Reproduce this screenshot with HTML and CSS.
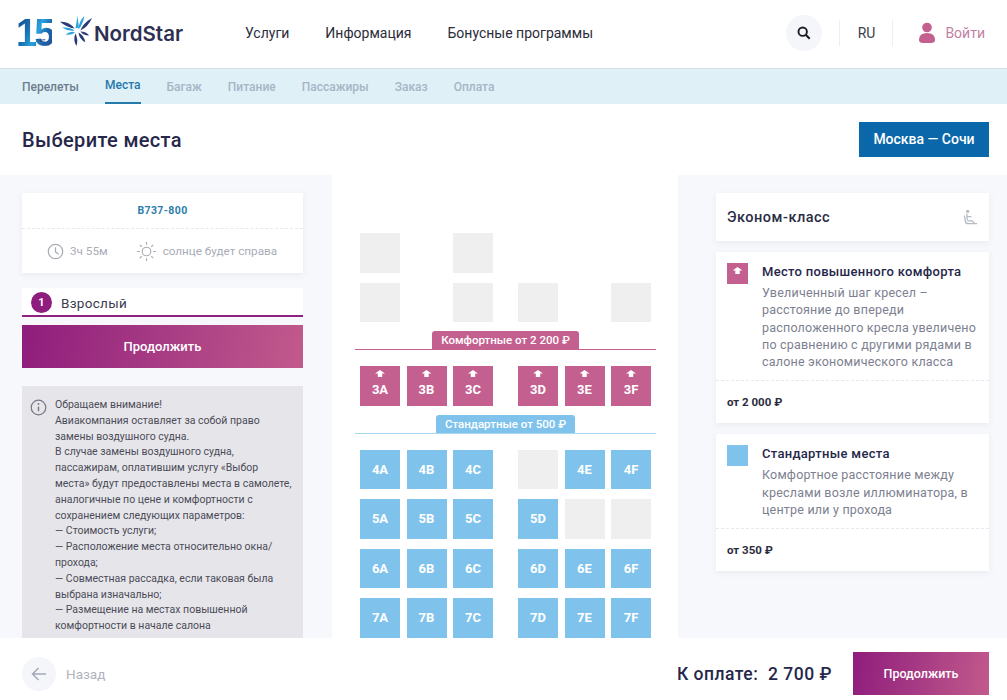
FILE: index.html
```html
<!DOCTYPE html>
<html lang="ru">
<head>
  <meta charset="UTF-8">
  <title>NordStar - Выберите места</title>
  <link rel="stylesheet" href="styles.css">
</head>
<body>
  <!-- Top header -->
  <header class="top-bar">
    <div class="logo">
      <div class="logo-years"><span class="years-num">15</span><span class="years-label">лет</span></div>
      <svg class="logo-star" viewBox="0 0 34 34" width="33" height="33">
        <path d="M0 7 Q9 6 15 14 Q7 13 0 7Z" fill="#2a3a78"/>
        <path d="M2 13 Q10 12 15 16 Q8 17 2 13Z" fill="#2aa3dc"/>
        <path d="M6 20 Q11 16 15.500 18 Q11 21 6 20Z" fill="#2aa3dc"/>
        <path d="M18 1 L19.500 13 L16 14 Z" fill="#2aa3dc"/>
        <path d="M25 1 Q24 9 19 15 Q19 7 25 1Z" fill="#2aa3dc"/>
        <path d="M33 3 Q29 12 21 16 Q24 8 33 3Z" fill="#2a3a78"/>
        <path d="M16 19 Q19 25 17 32 Q13 26 16 19Z" fill="#2a3a78"/>
        <path d="M19 18 Q25 21 26 28 Q20 25 19 18Z" fill="#2a3a78"/>
        <path d="M21 17 Q27 17 30 21 Q24 21 21 17Z" fill="#2a3a78"/>
      </svg>
      <span class="logo-name">NordStar</span>
    </div>
    <nav class="main-nav">
      <a>Услуги</a>
      <a>Информация</a>
      <a>Бонусные программы</a>
    </nav>
    <div class="top-tools">
      <span class="search-btn">
        <svg viewBox="0 0 16 16" width="14" height="14"><circle cx="6.500" cy="6.500" r="4.800" fill="none" stroke="#1c1c28" stroke-width="2.200"/><path d="M10 10 L14.500 14.500" stroke="#1c1c28" stroke-width="2.400"/></svg>
      </span>
      <span class="tool-sep"></span>
      <span class="lang">RU</span>
      <span class="tool-sep"></span>
      <a class="login">
        <svg viewBox="0 0 18 22" width="18" height="22"><circle cx="9" cy="5.500" r="4.800" fill="#c4608f"/><path d="M1 18 Q1 11 9 11 Q17 11 17 18 Q17 21 13 21 L5 21 Q1 21 1 18Z" fill="#c4608f"/></svg>
        Войти
      </a>
    </div>
  </header>

  <!-- Booking steps -->
  <nav class="steps">
    <a class="step done">Перелеты</a>
    <a class="step active">Места</a>
    <a class="step">Багаж</a>
    <a class="step">Питание</a>
    <a class="step">Пассажиры</a>
    <a class="step">Заказ</a>
    <a class="step">Оплата</a>
  </nav>

  <div class="title-band">
    <h1>Выберите места</h1>
    <a class="route-btn">Москва — Сочи</a>
  </div>

  <main class="content">
    <aside class="left-col">
      <section class="flight-card">
        <div class="plane-type">B737-800</div>
        <div class="flight-meta">
          <span class="meta-item">
            <svg viewBox="0 0 18 18" width="17" height="17"><circle cx="9" cy="9" r="7.600" fill="none" stroke="#a9acb4" stroke-width="1.300"/><path d="M9 4.500 V9.500 L12.500 12" fill="none" stroke="#a9acb4" stroke-width="1.300"/></svg>
            3ч 55м
          </span>
          <span class="meta-item">
            <svg viewBox="0 0 22 22" width="21" height="21"><circle cx="11" cy="11" r="4.500" fill="none" stroke="#a9acb4" stroke-width="1.200"/><path d="M11 1 V4 M11 18 V21 M1 11 H4 M18 11 H21 M4 4 L6 6 M16 16 L18 18 M18 4 L16 6 M6 16 L4 18" stroke="#a9acb4" stroke-width="1.200"/></svg>
            солнце будет справа
          </span>
        </div>
      </section>

      <div class="passenger">
        <span class="pass-num">1</span>
        <span>Взрослый</span>
      </div>
      <a class="btn-purple btn-wide">Продолжить</a>

      <section class="notice">
        <svg class="notice-icon" viewBox="0 0 18 18" width="17" height="17"><circle cx="9" cy="9" r="7.700" fill="none" stroke="#77778a" stroke-width="1.300"/><circle cx="9" cy="5.300" r="1" fill="#77778a"/><path d="M9 8 V13" stroke="#77778a" stroke-width="1.500"/></svg>
        <p>Обращаем внимание!<br>
        Авиакомпания оставляет за собой право замены воздушного судна.<br>
        В случае замены воздушного судна, пассажирам, оплатившим услугу «Выбор места» будут предоставлены места в самолете, аналогичные по цене и комфортности с сохранением следующих параметров:<br>
        — Стоимость услуги;<br>
        — Расположение места относительно окна/прохода;<br>
        — Совместная рассадка, если таковая была выбрана изначально;<br>
        — Размещение на местах повышенной комфортности в начале салона</p>
      </section>
    </aside>

    <section class="seat-map">
      <div class="seat-row">
        <span class="seat"></span><span class="seat blank"></span><span class="seat"></span>
        <span class="aisle"></span>
        <span class="seat blank"></span><span class="seat blank"></span><span class="seat blank"></span>
      </div>
      <div class="seat-row">
        <span class="seat"></span><span class="seat blank"></span><span class="seat"></span>
        <span class="aisle"></span>
        <span class="seat"></span><span class="seat blank"></span><span class="seat"></span>
      </div>

      <div class="zone zone-comfort"><span>Комфортные от 2 200 ₽</span></div>
      <div class="seat-row">
        <span class="seat comfort">3A</span><span class="seat comfort">3B</span><span class="seat comfort">3C</span>
        <span class="aisle"></span>
        <span class="seat comfort">3D</span><span class="seat comfort">3E</span><span class="seat comfort">3F</span>
      </div>

      <div class="zone zone-standard"><span>Стандартные от 500 ₽</span></div>
      <div class="seat-row">
        <span class="seat standard">4A</span><span class="seat standard">4B</span><span class="seat standard">4C</span>
        <span class="aisle"></span>
        <span class="seat"></span><span class="seat standard">4E</span><span class="seat standard">4F</span>
      </div>
      <div class="seat-row">
        <span class="seat standard">5A</span><span class="seat standard">5B</span><span class="seat standard">5C</span>
        <span class="aisle"></span>
        <span class="seat standard">5D</span><span class="seat"></span><span class="seat"></span>
      </div>
      <div class="seat-row">
        <span class="seat standard">6A</span><span class="seat standard">6B</span><span class="seat standard">6C</span>
        <span class="aisle"></span>
        <span class="seat standard">6D</span><span class="seat standard">6E</span><span class="seat standard">6F</span>
      </div>
      <div class="seat-row">
        <span class="seat standard">7A</span><span class="seat standard">7B</span><span class="seat standard">7C</span>
        <span class="aisle"></span>
        <span class="seat standard">7D</span><span class="seat standard">7E</span><span class="seat standard">7F</span>
      </div>
    </section>

    <aside class="right-col">
      <div class="class-card">
        <span>Эконом-класс</span>
        <svg viewBox="0 0 16 18" width="15" height="17"><circle cx="5" cy="2.500" r="1.800" fill="#b5bcc4"/><path d="M4 5 L4.500 11 Q4.800 12.500 6.500 12.500 H10 L12.500 16 M1.500 7 L2.500 13 Q3 15.500 5.500 15.500 H15 M5 8 H9" fill="none" stroke="#b5bcc4" stroke-width="1.400"/></svg>
      </div>

      <div class="legend-card">
        <div class="legend-body">
          <span class="swatch swatch-comfort"></span>
          <div>
            <h3>Место повышенного комфорта</h3>
            <p>Увеличенный шаг кресел – расстояние до впереди расположенного кресла увеличено по сравнению с другими рядами в салоне экономического класса</p>
          </div>
        </div>
        <div class="legend-price">от 2 000 ₽</div>
      </div>

      <div class="legend-card">
        <div class="legend-body">
          <span class="swatch swatch-standard"></span>
          <div>
            <h3>Стандартные места</h3>
            <p>Комфортное расстояние между креслами возле иллюминатора, в центре или у прохода</p>
          </div>
        </div>
        <div class="legend-price">от 350 ₽</div>
      </div>
    </aside>
  </main>

  <footer class="bottom-bar">
    <a class="back">
      <span class="back-circle">
        <svg viewBox="0 0 16 14" width="16" height="14"><path d="M15 7 H2 M7.500 1 L1.500 7 L7.500 13" fill="none" stroke="#a5a9b8" stroke-width="1.500"/></svg>
      </span>
      Назад
    </a>
    <div class="total">К оплате:&nbsp; 2 700 ₽</div>
    <a class="btn-purple btn-next">Продолжить</a>
  </footer>
</body>
</html>
```

FILE: styles.css
```css
* {
  box-sizing: border-box;
}
html, body {
  height: 100%;
}
body {
  margin: 0;
  height: 100vh;
  overflow: hidden;
  display: flex;
  flex-direction: column;
  font-family: Roboto, "Liberation Sans", sans-serif;
  color: #2b2c4a;
  background: #fff;
}

/* header */
.top-bar {
  flex: none;
  height: 69px;
  display: flex;
  align-items: center;
  padding: 0 22px 2px 16px;
  border-bottom: 1px solid #d3dfe5;
}
.logo {
  width: 229px;
  display: flex;
  align-items: center;
}
.logo-years {
  position: relative;
  width: 43px;
  height: 36px;
  line-height: 36px;
}
.years-num {
  font-family: "Liberation Sans", sans-serif;
  font-size: 38px;
  font-weight: bold;
  letter-spacing: -3px;
  color: transparent;
  background: linear-gradient(115deg, #1a3f86 0%, #1a6eb0 35%, #2aa3dc 55%, #1c62a8 75%, #274a8c 100%);
  -webkit-background-clip: text;
  background-clip: text;
}
.years-label {
  position: absolute;
  left: 20px;
  top: 21px;
  font-size: 6px;
  line-height: 8px;
  color: #2a3a78;
}
.logo-star {
  margin-left: 1px;
  margin-top: -4px;
}
.logo-name {
  margin-left: 1px;
  font-family: Inter, sans-serif;
  font-size: 20.500px;
  font-weight: 600;
  color: #2e3052;
}
.main-nav {
  display: flex;
  gap: 36px;
  font-size: 14px;
  color: #2b2c3a;
}
.top-tools {
  margin-left: auto;
  display: flex;
  align-items: center;
  font-size: 14px;
}
.search-btn {
  width: 36px;
  height: 36px;
  border-radius: 50%;
  background: #f4f6fa;
  display: flex;
  align-items: center;
  justify-content: center;
}
.tool-sep {
  width: 1px;
  height: 26px;
  background: #eceef0;
  margin-left: 17px;
}
.lang {
  margin-left: 18px;
  color: #3c3e4c;
}
.login {
  margin-left: 25px;
  display: flex;
  align-items: center;
  gap: 9px;
  color: #c47fa5;
}

/* steps */
.steps {
  flex: none;
  height: 35px;
  padding: 0 22px;
  display: flex;
  gap: 26px;
  background: #dff0f7;
  font-size: 12px;
  font-weight: 500;
  color: #a7b5c6;
}
.step {
  line-height: 37px;
}
.step.done {
  color: #6e7e8e;
}
.step.active {
  line-height: 33px;
  height: 35px;
  color: #2579ab;
  border-bottom: 2px solid #2579ab;
}

.title-band {
  flex: none;
  height: 71px;
  padding: 0 18px 0 22px;
  display: flex;
  align-items: center;
  justify-content: space-between;
}
.title-band h1 {
  margin: 0;
  font-size: 20px;
  font-weight: 500;
  letter-spacing: 0.350px;
  color: #26274a;
}
.route-btn {
  width: 130px;
  height: 35px;
  line-height: 35px;
  text-align: center;
  background: #0a68aa;
  color: #fff;
  font-size: 14px;
  font-weight: 500;
}

/* main columns */
.content {
  flex: 1;
  min-height: 0;
  overflow: hidden;
  display: flex;
  align-items: stretch;
  background: #f6f8fb;
}
.left-col {
  width: 332px;
  flex: none;
  padding: 18px 29px 0 22px;
}
.flight-card {
  height: 80px;
  background: #fff;
  box-shadow: 0 2px 6px #e8ebf0;
}
.plane-type {
  height: 36px;
  line-height: 36px;
  text-align: center;
  font-size: 10.500px;
  font-weight: 700;
  letter-spacing: 0.400px;
  color: #2d7dac;
  border-bottom: 1px dashed #e6e8ec;
}
.flight-meta {
  height: 44px;
  padding-left: 25px;
  display: flex;
  align-items: center;
  gap: 28px;
  font-size: 11.700px;
  color: #a9acb8;
}
.meta-item {
  display: flex;
  align-items: center;
  gap: 6px;
}
.passenger {
  margin-top: 15px;
  height: 29px;
  padding: 2px 9px 0 9px;
  display: flex;
  align-items: center;
  gap: 9px;
  background: #fff;
  border-bottom: 2px solid #8e2280;
  font-size: 13.500px;
  letter-spacing: 0.300px;
  color: #3b3c50;
}
.pass-num {
  width: 21px;
  height: 21px;
  line-height: 21px;
  text-align: center;
  border-radius: 50%;
  background: #8e1d7e;
  color: #fff;
  font-size: 11px;
  font-weight: 700;
  letter-spacing: 0;
}
.btn-purple {
  display: block;
  text-align: center;
  background: linear-gradient(100deg, #8e1d7c 0%, #c25a8c 100%);
  color: #fff;
  font-weight: 500;
}
.btn-wide {
  margin-top: 8px;
  height: 43px;
  line-height: 43px;
  font-size: 13px;
}
.notice {
  margin-top: 18px;
  height: 300px;
  padding: 11px 8px 0 8px;
  display: flex;
  gap: 8px;
  background: #e6e6ea;
}
.notice-icon {
  flex: none;
  margin-top: 2px;
}
.notice p {
  margin: 0;
  font-size: 10.500px;
  line-height: 15.800px;
  color: #4b4b58;
}

/* seat map */
.seat-map {
  width: 346px;
  flex: none;
  padding: 58px 0 0 28px;
  background: #fff;
  display: flex;
  flex-direction: column;
  gap: 10px;
}
.seat-row {
  flex: none;
  display: flex;
  gap: 6.500px;
}
.aisle {
  width: 12px;
  flex: none;
}
.seat {
  width: 40px;
  height: 39.500px;
  flex: none;
  position: relative;
  display: flex;
  align-items: center;
  justify-content: center;
  background: #efefef;
  color: #fff;
  font-size: 13px;
  font-weight: 700;
}
.seat.blank {
  visibility: hidden;
}
.seat.comfort {
  background: #c4608f;
  padding-top: 7px;
}
.seat.comfort::before,
.swatch-comfort::before {
  content: "";
  position: absolute;
  top: 4px;
  left: 50%;
  width: 10px;
  height: 7px;
  margin-left: -5px;
  background: #fff;
  clip-path: polygon(50% 0, 100% 50%, 72% 50%, 72% 100%, 28% 100%, 28% 50%, 0 50%);
}
.seat.standard {
  background: #7fc3ec;
}
.zone {
  flex: none;
  margin: -1px 22px 6px -5px;
  width: 301px;
  height: 19px;
  text-align: center;
  line-height: 0;
}
.zone span {
  display: inline-block;
  height: 18px;
  line-height: 19px;
  padding: 0 9px;
  border-radius: 3px 3px 0 0;
  color: #fff;
  font-size: 11.500px;
  font-weight: 500;
}
.zone-comfort {
  border-bottom: 1px solid #c4608f;
}
.zone-comfort span {
  background: #c4608f;
}
.zone-standard {
  border-bottom: 1px solid #a9d8f2;
}
.zone-standard span {
  background: #7fc3ec;
}

/* right legend */
.right-col {
  flex: 1;
  padding: 18px 18px 0 38px;
  display: flex;
  flex-direction: column;
  gap: 11px;
}
.class-card {
  height: 48px;
  padding: 0 11px;
  display: flex;
  align-items: center;
  justify-content: space-between;
  background: #fff;
  box-shadow: 0 2px 6px #e8ebf0;
  font-size: 14.500px;
  font-weight: 500;
  letter-spacing: 0.500px;
  color: #2b2c44;
}
.legend-card {
  background: #fff;
  box-shadow: 0 2px 6px #e8ebf0;
}
.legend-body {
  padding: 11px 11px 10px;
  display: flex;
  gap: 14px;
  border-bottom: 1px dashed #e6e8ec;
}
.swatch {
  width: 21px;
  height: 21px;
  flex: none;
  position: relative;
}
.swatch-comfort {
  background: #c4608f;
}
.swatch-standard {
  background: #7fc3ec;
}
.legend-body h3 {
  margin: 0 0 3px;
  font-size: 13px;
  line-height: 18px;
  font-weight: 500;
  letter-spacing: 0.300px;
  color: #26274a;
}
.legend-body p {
  margin: 0;
  font-size: 12.500px;
  line-height: 17.300px;
  letter-spacing: 0.200px;
  color: #7d7f90;
}
.legend-price {
  height: 42px;
  line-height: 43px;
  padding: 0 11px;
  font-size: 11.500px;
  font-weight: 700;
  color: #2b2c3e;
}

/* footer */
.bottom-bar {
  flex: none;
  height: 62px;
  padding: 14px 18px 5px 22px;
  display: flex;
  align-items: center;
  background: #fff;
}
.back {
  display: flex;
  align-items: center;
  gap: 10px;
  font-size: 13.500px;
  color: #b0b3be;
}
.back-circle {
  width: 34px;
  height: 34px;
  border-radius: 50%;
  background: #f4f6fa;
  display: flex;
  align-items: center;
  justify-content: center;
}
.total {
  margin-left: auto;
  font-size: 17.500px;
  font-weight: 500;
  letter-spacing: 0.500px;
  color: #26274a;
}
.btn-next {
  width: 136px;
  height: 43px;
  line-height: 43px;
  margin-left: 21px;
  font-size: 12.500px;
}
```
